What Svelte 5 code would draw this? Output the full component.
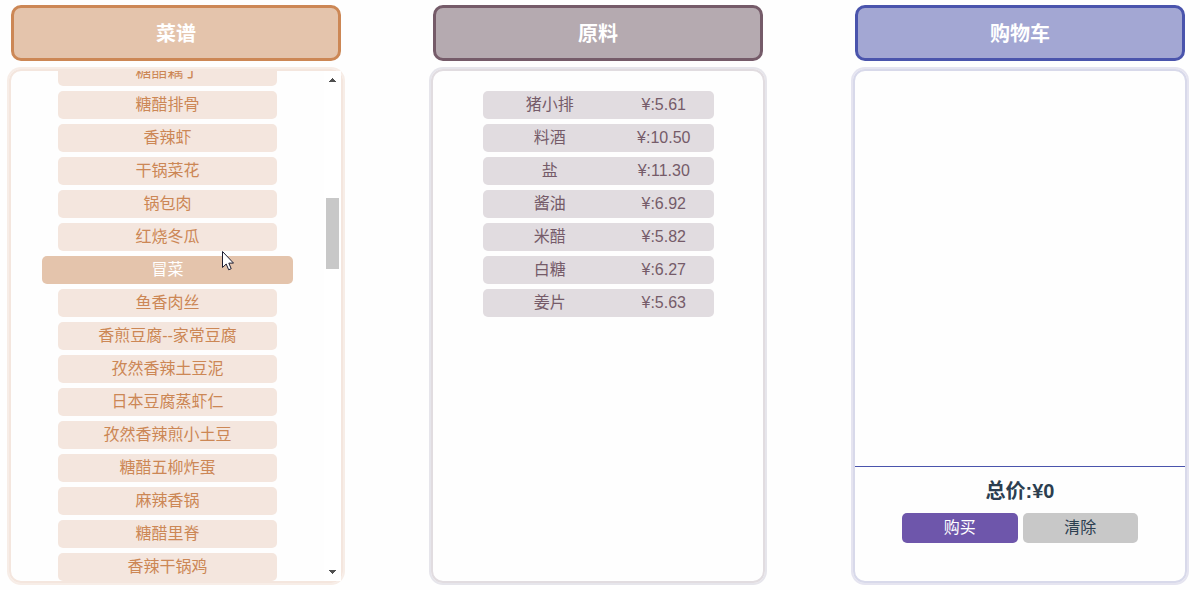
<script>
  import { onMount } from 'svelte';

  const recipes = [
    '糖醋藕丁', '糖醋排骨', '香辣虾', '干锅菜花', '锅包肉', '红烧冬瓜', '冒菜', '鱼香肉丝',
    '香煎豆腐--家常豆腐', '孜然香辣土豆泥', '日本豆腐蒸虾仁', '孜然香辣煎小土豆',
    '糖醋五柳炸蛋', '麻辣香锅', '糖醋里脊', '香辣干锅鸡'
  ];
  const ingredients = [
    ['猪小排', '5.61'], ['料酒', '10.50'], ['盐', '11.30'], ['酱油', '6.92'],
    ['米醋', '5.82'], ['白糖', '6.27'], ['姜片', '5.63']
  ];

  let active = $state('冒菜');
  let total = $state(0);
  let list;

  onMount(() => {
    list.scrollTop = list.scrollHeight;
  });
</script>

<main>
  <section class="recipes">
    <h2>菜谱</h2>
    <div class="panel scroller">
      <ul class="list" bind:this={list}>
        {#each recipes as name}
          <li><button class="dish" class:active={name === active} onclick={() => (active = name)}>{name}</button></li>
        {/each}
      </ul>
      <div class="bar" aria-hidden="true">
        <svg viewBox="0 0 17 17"><path d="M5 11h7v-1h-1v-1h-1v-1h-1v-1h-1v1h-1v1h-1v1h-1z" /></svg>
        <div class="track"><div class="thumb"></div></div>
        <svg viewBox="0 0 17 17"><path d="M5 6h7v1h-1v1h-1v1h-1v1h-1v-1h-1v-1h-1v-1h-1z" /></svg>
      </div>
      <svg class="cursor" viewBox="0 0 12 20" aria-hidden="true">
        <path d="M.5 .5v16l3.7-3.5 2.5 5.8 2.5-1.1-2.4-5.6h4.7z" />
      </svg>
    </div>
  </section>

  <section class="ingredients">
    <h2>原料</h2>
    <div class="panel">
      <table>
        <tbody>
          {#each ingredients as [name, price]}
            <tr><td>{name}</td><td>¥:{price}</td></tr>
          {/each}
        </tbody>
      </table>
    </div>
  </section>

  <section class="cart">
    <h2>购物车</h2>
    <div class="panel">
      <div class="items"></div>
      <footer>
        <p>总价:¥{total}</p>
        <div class="actions">
          <button class="buy">购买</button>
          <button class="clear" onclick={() => (total = 0)}>清除</button>
        </div>
      </footer>
    </div>
  </section>
</main>

<style>
  :global(body) {
    margin: 0;
    background: #fefefe;
  }
  main {
    display: grid;
    grid-template-columns: repeat(3, 1fr);
    column-gap: 88px;
    padding: 5px 13px 5px 9px;
    font: 16px/28px "Liberation Sans", "Noto Sans CJK SC", sans-serif;
    color: #2c3e50;
  }
  section {
    display: flex;
    flex-direction: column;
    gap: 8px;
  }
  .recipes {
    --strong: #cc8755;
    --head: #e4c4ac;
    --soft: #f4e6de;
    --halo: #f7ede7;
  }
  .ingredients {
    --strong: #755b69;
    --head: #b5aab0;
    --soft: #e1dce0;
    --halo: #e6e5eb;
  }
  .cart {
    --strong: #4a54ac;
    --head: #a3a7d3;
    --soft: #d8d9ea;
    --halo: #e5e4f0;
  }
  h2 {
    margin: 0 2px;
    padding: 12px 0 10px;
    border: 3px solid var(--strong);
    border-radius: 10px;
    background: var(--head);
    color: #fff;
    font-size: 20px;
    line-height: 28px;
    text-align: center;
  }
  .panel {
    position: relative;
    display: flex;
    flex-direction: column;
    height: calc(100vh - 80px);
    border: 2px solid var(--soft);
    border-radius: 12px;
    box-shadow: 0 0 0 2px var(--halo);
  }
  .scroller {
    flex-direction: row;
  }
  button {
    display: block;
    padding: 0;
    border: 0;
    border-radius: 5px;
    font: inherit;
    text-align: center;
    cursor: pointer;
  }
  .list {
    flex: 1;
    display: flex;
    flex-direction: column;
    gap: 5px;
    margin: 0;
    padding: 0;
    list-style: none;
    overflow-y: auto;
    scrollbar-width: none;
  }
  .dish {
    width: 70%;
    height: 28px;
    margin: 0 auto;
    background: var(--soft);
    color: var(--strong);
  }
  .dish.active {
    width: 80%;
    background: var(--head);
    color: #fff;
  }
  .bar {
    display: flex;
    flex-direction: column;
    width: 17px;
    background: #fff;
  }
  .bar svg {
    width: 17px;
    height: 17px;
    fill: #505050;
    shape-rendering: crispEdges;
  }
  .track {
    flex: 1;
    padding: 110px 2px 0;
  }
  .thumb {
    height: 71px;
    background: #c8c8c8;
  }
  .cursor {
    position: absolute;
    left: 211px;
    top: 180px;
    width: 12px;
    height: 20px;
    fill: #fff;
    stroke: #1c1c30;
  }
  table {
    display: block;
    width: 70%;
    margin: 20px auto 0;
    color: var(--strong);
    text-align: center;
  }
  tbody {
    display: grid;
    gap: 5px;
  }
  tr {
    display: grid;
    grid-template-columns: 59% 41%;
    padding-right: 3px;
    border-radius: 5px;
    background: var(--soft);
  }
  td {
    padding: 0;
  }
  .items {
    flex: 1;
  }
  footer {
    height: 114px;
    border-top: 1px solid var(--strong);
  }
  p {
    margin: 10px 0 8px;
    font-size: 20px;
    font-weight: bold;
    text-align: center;
  }
  .actions {
    display: flex;
    justify-content: center;
    gap: 5px;
  }
  .actions button {
    width: 35%;
    height: 30px;
  }
  .buy {
    background: #6e56ab;
    color: #fff;
  }
  .clear {
    background: #c8c8c8;
    color: #2c3e50;
  }
</style>
